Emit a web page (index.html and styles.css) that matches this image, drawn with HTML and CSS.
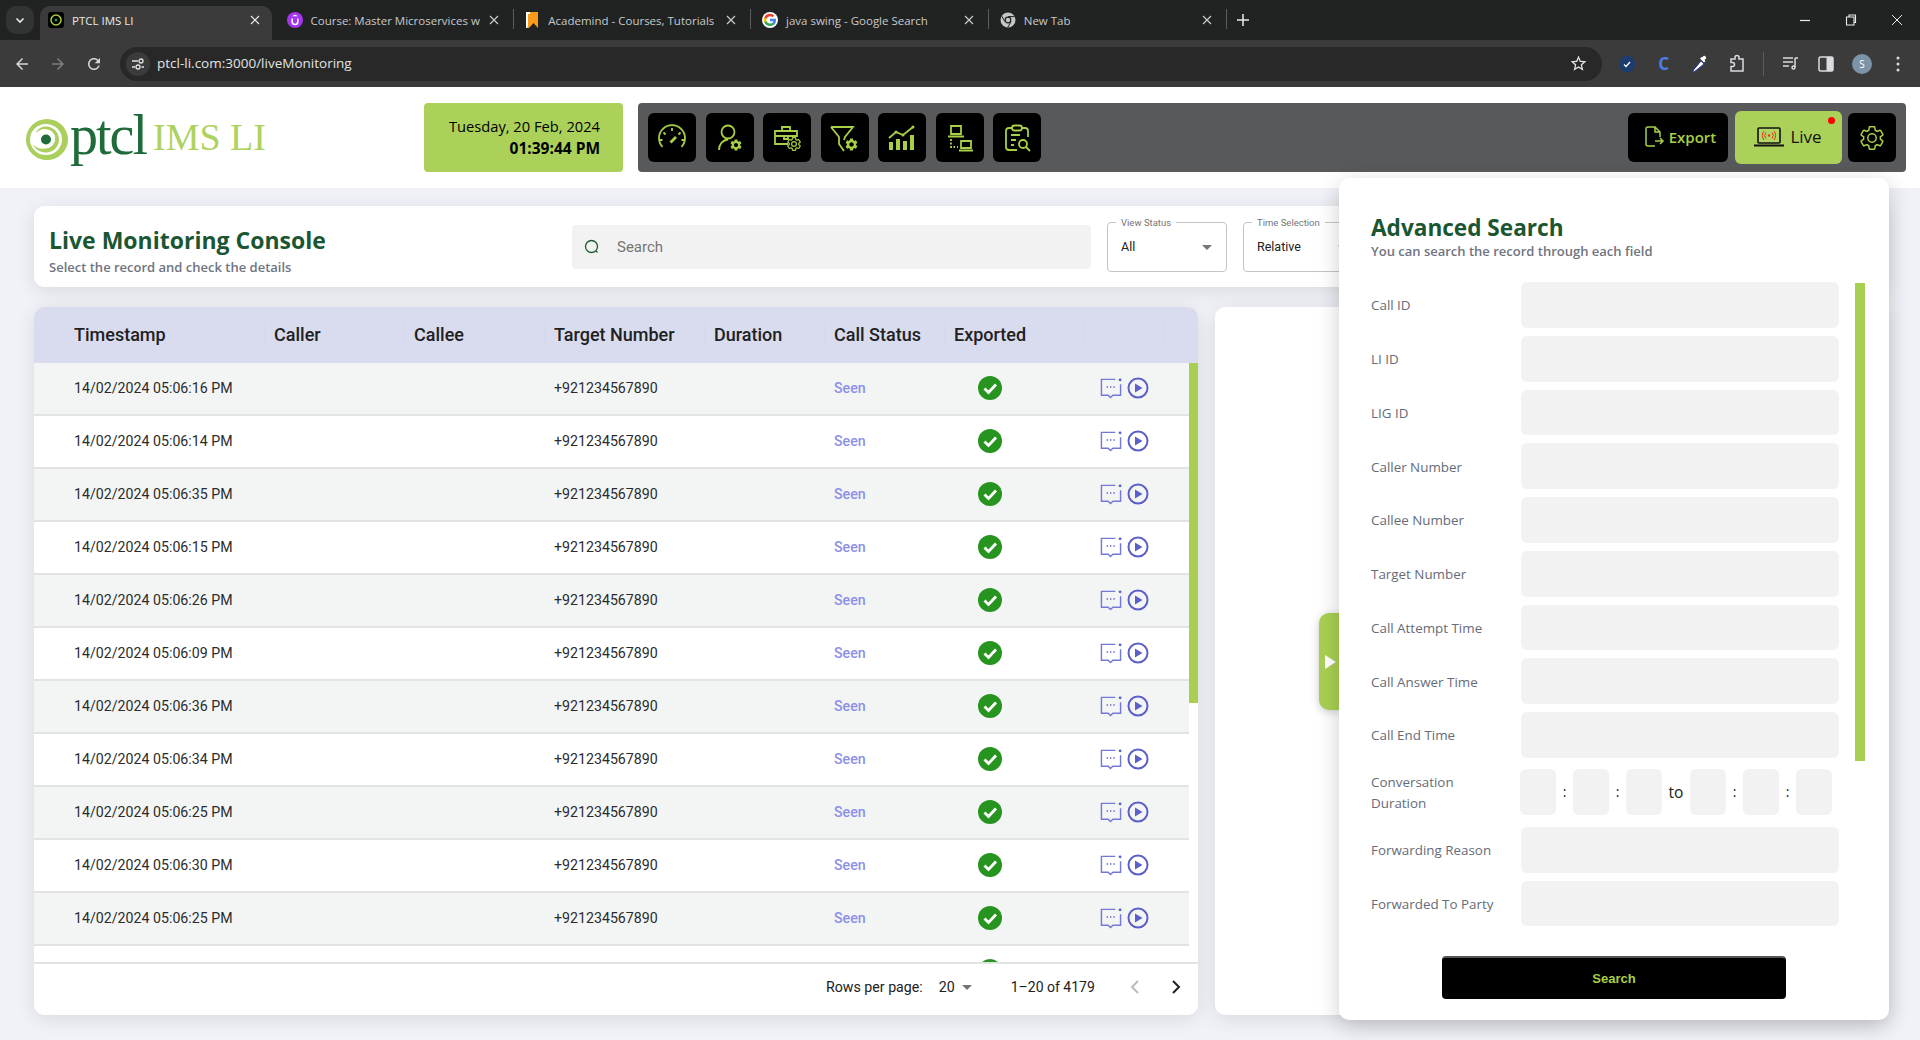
FILE: index.html
```html
<!DOCTYPE html>
<html>
<head>
    <title>PTCL IMS LI</title>
    <link rel="stylesheet" href="styles.css">
</head>
<body>
    <svg class="sprites" width="0" height="0">
        <symbol id="x" viewBox="0 0 12 12"><path d="M2 2l8 8M10 2l-8 8" fill="none" stroke="currentColor" stroke-width="1.2"/></symbol>
        <symbol id="cog" viewBox="0 0 24 24"><path fill-rule="evenodd" d="M19.14 12.94c.04-.3.06-.61.06-.94 0-.32-.02-.64-.07-.94l2.03-1.58c.18-.14.23-.41.12-.61l-1.92-3.32c-.12-.22-.37-.29-.59-.22l-2.39.96c-.5-.38-1.03-.7-1.62-.94l-.36-2.54c-.04-.24-.24-.41-.48-.41h-3.84c-.24 0-.43.17-.47.41l-.36 2.54c-.59.24-1.13.57-1.62.94l-2.39-.96c-.22-.08-.47 0-.59.22L2.74 8.87c-.12.21-.08.47.12.61l2.03 1.58c-.05.3-.09.63-.09.94s.02.64.07.94l-2.03 1.58c-.18.14-.23.41-.12.61l1.92 3.32c.12.22.37.29.59.22l2.39-.96c.5.38 1.03.7 1.62.94l.36 2.54c.05.24.24.41.48.41h3.84c.24 0 .44-.17.47-.41l.36-2.54c.59-.24 1.13-.56 1.62-.94l2.39.96c.22.08.47 0 .59-.22l1.92-3.32c.12-.22.07-.47-.12-.61l-2.01-1.58zM12 15.6c-1.98 0-3.6-1.62-3.6-3.6s1.62-3.6 3.6-3.6 3.6 1.62 3.6 3.6-1.62 3.6-3.6 3.6z"/></symbol>
        <symbol id="check" viewBox="0 0 24 24"><circle cx="12" cy="12" r="12" fill="#289420"/><path d="M6.5 12.5l4 4 7.5-8" fill="none" stroke="#fff" stroke-width="2.8"/></symbol>
        <symbol id="chat" viewBox="0 0 23 24"><path d="M16 3H1.5v16.500h7l2.500 2.500 2.500-2.500h8V8" fill="none" stroke="#7478d8" stroke-width="1.500"/><circle cx="21" cy="3.500" r="1.500" fill="#5b5fc7"/><path d="M7 11h1.400M10.500 11h1.400M14 11h1.400" stroke="#5b5fc7" stroke-width="1.500"/></symbol>
        <symbol id="play" viewBox="0 0 22 22"><circle cx="11" cy="11" r="9.500" fill="none" stroke="#5b5fc7" stroke-width="2"/><path d="M8 6.500l7.500 4.500L8 15.500z" fill="#5b5fc7"/></symbol>
    </svg>

    <div class="tabstrip">
        <button class="tab-menu"><svg width="12" height="12" viewBox="0 0 12 12"><path d="M2.500 4.500L6 8l3.500-3.500" fill="none" stroke="#e8eaed" stroke-width="1.600"/></svg></button>
        <div class="tab active">
            <svg class="tab-icon" viewBox="0 0 16 16"><rect width="16" height="16" rx="3" fill="#000"/><circle cx="8" cy="8" r="5" fill="none" stroke="#a8cf45" stroke-width="1.500"/><circle cx="8" cy="8" r="1.500" fill="#2f8f46"/></svg>
            <span class="tab-title">PTCL IMS LI</span>
            <svg class="tab-close"><use href="#x"/></svg>
        </div>
        <span class="tab-gap"></span>
        <div class="tab">
            <svg class="tab-icon" viewBox="0 0 16 16"><circle cx="8" cy="8" r="8" fill="#a435f0"/><path d="M5.200 6.500v3.200a2.800 2.800 0 0 0 5.600 0V6.500" fill="none" stroke="#fff" stroke-width="1.600"/><path d="M8 2.500l3 1.800H5z" fill="#fff"/></svg>
            <span class="tab-title">Course: Master Microservices w</span>
            <svg class="tab-close"><use href="#x"/></svg>
        </div>
        <span class="tab-sep"></span>
        <div class="tab">
            <svg class="tab-icon" viewBox="0 0 16 16"><path d="M2 0h12v16l-4.500-5L5 16H3z" fill="#f89a1c"/><path d="M2 0h4v2H4v12l-1 2H2z" fill="#fff"/></svg>
            <span class="tab-title">Academind - Courses, Tutorials</span>
            <svg class="tab-close"><use href="#x"/></svg>
        </div>
        <span class="tab-sep"></span>
        <div class="tab">
            <svg class="tab-icon" viewBox="0 0 16 16"><circle cx="8" cy="8" r="8" fill="#fff"/><path d="M14 8.100c0-.5 0-.9-.1-1.300H8v2.500h3.400a3 3 0 0 1-1.300 1.900v1.600h2.100c1.200-1.100 1.800-2.800 1.800-4.700z" fill="#4285f4"/><path d="M8 14c1.700 0 3.100-.6 4.200-1.500l-2.100-1.600c-.6.400-1.300.6-2.100.6a3.700 3.700 0 0 1-3.500-2.500H2.300v1.600A6.300 6.300 0 0 0 8 14z" fill="#34a853"/><path d="M4.500 9a3.700 3.700 0 0 1 0-2.200V5.200H2.300a6.300 6.300 0 0 0 0 5.500z" fill="#fbbc05"/><path d="M8 4.300c.9 0 1.700.3 2.400 1l1.800-1.800A6.100 6.100 0 0 0 2.300 5.200l2.200 1.600A3.700 3.700 0 0 1 8 4.300z" fill="#ea4335"/></svg>
            <span class="tab-title">java swing - Google Search</span>
            <svg class="tab-close"><use href="#x"/></svg>
        </div>
        <span class="tab-sep"></span>
        <div class="tab">
            <svg class="tab-icon" viewBox="0 0 16 16"><circle cx="8" cy="8" r="7.500" fill="#c4c7c5"/><circle cx="8" cy="8" r="3.400" fill="#202124"/><circle cx="8" cy="8" r="2.200" fill="#c4c7c5"/><path d="M8 4.600h6.500M5 9.700L1.800 4.200M11 9.700l-3.200 5.600" stroke="#202124" stroke-width="1"/></svg>
            <span class="tab-title">New Tab</span>
            <svg class="tab-close"><use href="#x"/></svg>
        </div>
        <span class="tab-sep"></span>
        <svg class="new-tab" width="14" height="14" viewBox="0 0 14 14"><path d="M7 1v12M1 7h12" stroke="#e8eaed" stroke-width="1.500"/></svg>
        <div class="window-controls">
            <span class="win-btn"><svg width="12" height="12" viewBox="0 0 12 12"><path d="M1 6.500h10" stroke="#e8eaed" stroke-width="1.200"/></svg></span>
            <span class="win-btn"><svg width="12" height="12" viewBox="0 0 12 12"><path d="M4 2.500V1h6.500v7.500H9M1.500 3h7.500v8H1.500z" fill="none" stroke="#e8eaed" stroke-width="1.100"/></svg></span>
            <span class="win-btn"><svg width="12" height="12" viewBox="0 0 12 12"><path d="M1 1l10 10M11 1L1 11" stroke="#e8eaed" stroke-width="1"/></svg></span>
        </div>
    </div>

    <div class="toolbar">
        <span class="nav-btn"><svg width="18" height="18" viewBox="0 0 24 24" fill="#d5d7da"><path d="M20 11H7.830l5.590-5.590L12 4l-8 8 8 8 1.410-1.410L7.830 13H20v-2z"/></svg></span>
        <span class="nav-btn"><svg width="18" height="18" viewBox="0 0 24 24" fill="#7c7e80"><path d="M4 11h12.170l-5.590-5.590L12 4l8 8-8 8-1.410-1.410L16.170 13H4v-2z"/></svg></span>
        <span class="nav-btn"><svg width="18" height="18" viewBox="0 0 24 24" fill="#d5d7da"><path d="M17.650 6.350C16.200 4.900 14.210 4 12 4c-4.420 0-7.990 3.580-7.990 8s3.570 8 7.990 8c3.730 0 6.840-2.550 7.730-6h-2.080c-.82 2.330-3.040 4-5.650 4-3.310 0-6-2.690-6-6s2.690-6 6-6c1.660 0 3.140.69 4.220 1.780L13 11h7V4l-2.350 2.350z"/></svg></span>
        <div class="omnibox">
            <span class="site-btn"><svg width="14" height="14" viewBox="0 0 14 14" fill="none" stroke="#e3e3e3" stroke-width="1.300"><path d="M1 4h6M1 10h3M10.500 10H13"/><circle cx="10" cy="4" r="2"/><circle cx="7" cy="10" r="2"/></svg></span>
            <span class="url">ptcl-li.com:3000/liveMonitoring</span>
            <svg class="star" width="19" height="19" viewBox="0 0 24 24" fill="#e3e3e3"><path d="M22 9.240l-7.190-.62L12 2 9.190 8.630 2 9.240l5.460 4.730L5.820 21 12 17.270 18.180 21l-1.630-7.030L22 9.240zM12 15.400l-3.760 2.270 1-4.280-3.320-2.880 4.380-.38L12 6.100l1.710 4.040 4.380.38-3.320 2.880 1 4.280L12 15.400z"/></svg>
        </div>
        <div class="extensions">
            <span class="ext-btn"><svg width="16" height="18" viewBox="0 0 16 18"><ellipse cx="8" cy="9" rx="8" ry="8.500" fill="#1d3c6e"/><path d="M5 9.500l2 2 4-4.500" fill="none" stroke="#fff" stroke-width="1.300"/></svg></span>
            <span class="ext-btn ext-c">C</span>
            <span class="ext-btn"><svg width="18" height="20" viewBox="0 0 18 20"><path d="M3 18l-1 1 .5-3L10 7l3 3z" fill="#fff" stroke="#2a3fb8" stroke-width="1"/><path d="M11 3.500l1.500-1.500c1-1 3.500 1.500 2.500 2.500L13.500 6l1 1-1.500 1.500-4-4L10.500 3z" fill="#fff"/></svg></span>
            <span class="ext-btn"><svg width="18" height="20" viewBox="0 0 18 20" fill="none" stroke="#dadce0" stroke-width="1.500"><path d="M3 5h4V3.500a2 2 0 0 1 4 0V5h4v12H3v-4.500h1.500a2 2 0 0 0 0-4H3z"/></svg></span>
            <span class="ext-sep"></span>
            <span class="ext-btn"><svg width="18" height="18" viewBox="0 0 18 18" fill="none" stroke="#dadce0" stroke-width="1.500"><path d="M2 3h10M2 7h10M2 11h6M14 3v9"/><path d="M14 3h3"/><circle cx="12.500" cy="12.500" r="1.500"/></svg></span>
            <span class="ext-btn"><svg width="18" height="18" viewBox="0 0 18 18"><rect x="2" y="2" width="14" height="14" rx="1.500" fill="none" stroke="#dadce0" stroke-width="1.500"/><rect x="9.500" y="2" width="6.500" height="14" fill="#dadce0"/></svg></span>
            <span class="ext-btn"><span class="avatar">S</span></span>
            <span class="ext-btn"><svg width="4" height="16" viewBox="0 0 4 16" fill="#dadce0"><circle cx="2" cy="2" r="1.500"/><circle cx="2" cy="8" r="1.500"/><circle cx="2" cy="14" r="1.500"/></svg></span>
        </div>
    </div>

    <header class="app-header">
        <div class="logo">
            <svg class="logo-swirl" width="43" height="42" viewBox="0 0 43 42">
                <path fill-rule="evenodd" d="M21 0a21 20.500 0 1 1 0 41 21 20.500 0 1 1 0-41zM20 5a16 15.500 0 1 0 0 31 16 15.500 0 1 0 0-31z" fill="#aacf5c"/>
                <path fill-rule="evenodd" d="M20 7.500a13 13 0 1 1 0 26c-7 0-11-4-13-8 3 3 7 5 12 4a10 9.500 0 0 0 0-19.500c-4 0-7 2-9 4 1.500-4 5-6.500 10-6.500z" fill="#aacf5c"/>
                <circle cx="20" cy="20.500" r="5" fill="#1f6b3a"/>
            </svg>
            <span class="logo-ptcl">ptcl</span>
            <span class="logo-ims">IMS LI</span>
        </div>
        <div class="date-box">
            <div>Tuesday, 20 Feb, 2024</div>
            <div class="time">01:39:44 PM</div>
        </div>
        <nav class="main-nav">
            <button class="nav-icon"><svg viewBox="0 0 32 32"><path d="M6.500 25A13 13 0 1 1 25.500 25"/><path d="M16 6v3M7.500 10.500l2 2M24.500 10.500l-2 2M3.500 18h3M25.500 18h3"/><path d="M14.500 20.500L20 15" stroke-width="2.800"/></svg></button>
            <button class="nav-icon"><svg viewBox="0 0 32 32"><circle cx="14" cy="10" r="6.500"/><path d="M5 28c0-6 4-10 9-10.500"/><use href="#cog" x="15" y="16" width="14" height="14" class="cog-fill"/></svg></button>
            <button class="nav-icon"><svg viewBox="0 0 32 32"><path d="M17 22H4V9h22v6M4 9v5h22V9M11 9V5h8v4M13 14v3h4v-3"/><use href="#cog" x="15" y="14" width="16" height="16" class="cog-line"/></svg></button>
            <button class="nav-icon"><svg viewBox="0 0 32 32"><path d="M2 5h22l-8 10-1 3M2 5l8 10v7l5 7"/><use href="#cog" x="15" y="15" width="15" height="15" class="cog-fill"/></svg></button>
            <button class="nav-icon"><svg viewBox="0 0 32 32"><path class="solid" d="M3 20h4v8H3zM10 17h4v11h-4zM17 19h4v9h-4zM24 13h4v15h-4z"/><path d="M3 16l7-6 7 3 10-8"/><circle class="solid" cx="10" cy="10" r="1.500"/><circle class="solid" cx="17" cy="13" r="1.500"/><circle class="solid" cx="27" cy="5" r="1.500"/></svg></button>
            <button class="nav-icon"><svg viewBox="0 0 32 32"><path d="M7 4h10v8H7zM4 14.500h16"/><path d="M7 17v8h4M13 25h1" stroke-dasharray="2 1.500"/><path d="M17 19h10v7H17zM15 28.500h14"/></svg></button>
            <button class="nav-icon"><svg viewBox="0 0 32 32"><path d="M11 6H8a3 3 0 0 0-3 3v16a3 3 0 0 0 3 3h8M21 6h3a3 3 0 0 1 3 3v6"/><rect x="11" y="3.500" width="10" height="5" rx="2.500"/><path d="M10 13h9M10 18h5M10 23h3"/><circle cx="22" cy="22" r="4"/><path d="M25 25l4 4"/></svg></button>
            <div class="nav-right">
                <button class="export-btn">
                    <svg width="20" height="22" viewBox="0 0 20 22" fill="none" stroke="#a8cf45" stroke-width="1.500"><path d="M10 20H3a2 2 0 0 1-2-2V3a2 2 0 0 1 2-2h7l5 5v5M10 1v5h5M10 15h8M15 12l3 3-3 3"/></svg>
                    Export
                </button>
                <button class="live-btn">
                    <svg width="30" height="20" viewBox="0 0 30 20" fill="none"><rect x="4" y="1" width="22" height="15" rx="1" fill="#b3d764" stroke="#111" stroke-width="1.600"/><path d="M0 18.500h30" stroke="#111" stroke-width="2"/><circle cx="15" cy="8.500" r="1.200" fill="#e5331e"/><path d="M12 5.500a4.500 4.500 0 0 0 0 6M18 5.500a4.500 4.500 0 0 1 0 6M10 4a7 7 0 0 0 0 9M20 4a7 7 0 0 1 0 9" stroke="#e5331e" stroke-width="1"/></svg>
                    Live
                    <span class="live-dot"></span>
                </button>
                <button class="nav-icon"><svg class="settings" viewBox="0 0 24 24"><use href="#cog"/></svg></button>
            </div>
        </nav>
    </header>

    <main class="content">
        <section class="console-card">
            <div class="console-title">
                <h1>Live Monitoring Console</h1>
                <p>Select the record and check the details</p>
            </div>
            <div class="search-box">
                <svg width="18" height="18" viewBox="0 0 18 18" fill="none" stroke="#1f5a33" stroke-width="1.300"><circle cx="8.500" cy="8.500" r="6"/><path d="M13 13l1.500 1.500"/></svg>
                <span>Search</span>
            </div>
            <div class="select-box">
                <span class="select-label">View Status</span>
                <span>All</span>
                <span class="caret"></span>
            </div>
            <div class="select-box">
                <span class="select-label">Time Selection</span>
                <span>Relative</span>
                <span class="caret"></span>
            </div>
        </section>

        <section class="lower">
            <div class="table-card">
                <div class="grid-row grid-head">
                    <div class="cell">Timestamp</div>
                    <div class="cell">Caller</div>
                    <div class="cell">Callee</div>
                    <div class="cell">Target Number</div>
                    <div class="cell">Duration</div>
                    <div class="cell">Call Status</div>
                    <div class="cell">Exported</div>
                    <div class="cell"></div>
                </div>
                <div class="grid-body">
                    <div class="scroll-thumb"></div>
                    <div class="grid-row"><div class="cell">14/02/2024 05:06:16 PM</div><div class="cell"></div><div class="cell"></div><div class="cell">+921234567890</div><div class="cell"></div><div class="cell seen">Seen</div><div class="cell"><svg class="check"><use href="#check"/></svg></div><div class="cell actions"><svg class="chat"><use href="#chat"/></svg><svg class="play"><use href="#play"/></svg></div></div>
                    <div class="grid-row"><div class="cell">14/02/2024 05:06:14 PM</div><div class="cell"></div><div class="cell"></div><div class="cell">+921234567890</div><div class="cell"></div><div class="cell seen">Seen</div><div class="cell"><svg class="check"><use href="#check"/></svg></div><div class="cell actions"><svg class="chat"><use href="#chat"/></svg><svg class="play"><use href="#play"/></svg></div></div>
                    <div class="grid-row"><div class="cell">14/02/2024 05:06:35 PM</div><div class="cell"></div><div class="cell"></div><div class="cell">+921234567890</div><div class="cell"></div><div class="cell seen">Seen</div><div class="cell"><svg class="check"><use href="#check"/></svg></div><div class="cell actions"><svg class="chat"><use href="#chat"/></svg><svg class="play"><use href="#play"/></svg></div></div>
                    <div class="grid-row"><div class="cell">14/02/2024 05:06:15 PM</div><div class="cell"></div><div class="cell"></div><div class="cell">+921234567890</div><div class="cell"></div><div class="cell seen">Seen</div><div class="cell"><svg class="check"><use href="#check"/></svg></div><div class="cell actions"><svg class="chat"><use href="#chat"/></svg><svg class="play"><use href="#play"/></svg></div></div>
                    <div class="grid-row"><div class="cell">14/02/2024 05:06:26 PM</div><div class="cell"></div><div class="cell"></div><div class="cell">+921234567890</div><div class="cell"></div><div class="cell seen">Seen</div><div class="cell"><svg class="check"><use href="#check"/></svg></div><div class="cell actions"><svg class="chat"><use href="#chat"/></svg><svg class="play"><use href="#play"/></svg></div></div>
                    <div class="grid-row"><div class="cell">14/02/2024 05:06:09 PM</div><div class="cell"></div><div class="cell"></div><div class="cell">+921234567890</div><div class="cell"></div><div class="cell seen">Seen</div><div class="cell"><svg class="check"><use href="#check"/></svg></div><div class="cell actions"><svg class="chat"><use href="#chat"/></svg><svg class="play"><use href="#play"/></svg></div></div>
                    <div class="grid-row"><div class="cell">14/02/2024 05:06:36 PM</div><div class="cell"></div><div class="cell"></div><div class="cell">+921234567890</div><div class="cell"></div><div class="cell seen">Seen</div><div class="cell"><svg class="check"><use href="#check"/></svg></div><div class="cell actions"><svg class="chat"><use href="#chat"/></svg><svg class="play"><use href="#play"/></svg></div></div>
                    <div class="grid-row"><div class="cell">14/02/2024 05:06:34 PM</div><div class="cell"></div><div class="cell"></div><div class="cell">+921234567890</div><div class="cell"></div><div class="cell seen">Seen</div><div class="cell"><svg class="check"><use href="#check"/></svg></div><div class="cell actions"><svg class="chat"><use href="#chat"/></svg><svg class="play"><use href="#play"/></svg></div></div>
                    <div class="grid-row"><div class="cell">14/02/2024 05:06:25 PM</div><div class="cell"></div><div class="cell"></div><div class="cell">+921234567890</div><div class="cell"></div><div class="cell seen">Seen</div><div class="cell"><svg class="check"><use href="#check"/></svg></div><div class="cell actions"><svg class="chat"><use href="#chat"/></svg><svg class="play"><use href="#play"/></svg></div></div>
                    <div class="grid-row"><div class="cell">14/02/2024 05:06:30 PM</div><div class="cell"></div><div class="cell"></div><div class="cell">+921234567890</div><div class="cell"></div><div class="cell seen">Seen</div><div class="cell"><svg class="check"><use href="#check"/></svg></div><div class="cell actions"><svg class="chat"><use href="#chat"/></svg><svg class="play"><use href="#play"/></svg></div></div>
                    <div class="grid-row"><div class="cell">14/02/2024 05:06:25 PM</div><div class="cell"></div><div class="cell"></div><div class="cell">+921234567890</div><div class="cell"></div><div class="cell seen">Seen</div><div class="cell"><svg class="check"><use href="#check"/></svg></div><div class="cell actions"><svg class="chat"><use href="#chat"/></svg><svg class="play"><use href="#play"/></svg></div></div>
                    <div class="grid-row"><div class="cell"></div><div class="cell"></div><div class="cell"></div><div class="cell"></div><div class="cell"></div><div class="cell"></div><div class="cell"><svg class="check"><use href="#check"/></svg></div><div class="cell"></div></div>
                </div>
                <div class="pagination">
                    <span>Rows per page:</span>
                    <span class="page-size">20<span class="caret"></span></span>
                    <span class="page-range">1–20 of 4179</span>
                    <svg class="page-prev" width="12" height="16" viewBox="0 0 12 16"><path d="M9 2L3 8l6 6" fill="none" stroke="#bdbdbd" stroke-width="2"/></svg>
                    <svg class="page-next" width="12" height="16" viewBox="0 0 12 16"><path d="M3 2l6 6-6 6" fill="none" stroke="#212121" stroke-width="2"/></svg>
                </div>
            </div>
            <div class="detail-card"></div>
        </section>
    </main>

    <div class="panel-handle"><span class="handle-arrow"></span></div>

    <aside class="search-panel">
        <h2>Advanced Search</h2>
        <p>You can search the record through each field</p>
        <div class="panel-scroll"></div>
        <form class="search-form">
            <div class="form-row"><label>Call ID</label><div class="input"></div></div>
            <div class="form-row"><label>LI ID</label><div class="input"></div></div>
            <div class="form-row"><label>LIG ID</label><div class="input"></div></div>
            <div class="form-row"><label>Caller Number</label><div class="input"></div></div>
            <div class="form-row"><label>Callee Number</label><div class="input"></div></div>
            <div class="form-row"><label>Target Number</label><div class="input"></div></div>
            <div class="form-row"><label>Call Attempt Time</label><div class="input"></div></div>
            <div class="form-row"><label>Call Answer Time</label><div class="input"></div></div>
            <div class="form-row"><label>Call End Time</label><div class="input"></div></div>
            <div class="form-row duration-row">
                <label>Conversation Duration</label>
                <div class="duration">
                    <div class="input"></div><span class="colon">:</span><div class="input"></div><span class="colon">:</span><div class="input"></div>
                    <span class="to">to</span>
                    <div class="input"></div><span class="colon">:</span><div class="input"></div><span class="colon">:</span><div class="input"></div>
                </div>
            </div>
            <div class="form-row"><label>Forwarding Reason</label><div class="input"></div></div>
            <div class="form-row"><label>Forwarded To Party</label><div class="input"></div></div>
        </form>
        <button class="search-btn">Search</button>
    </aside>
</body>
</html>
```

FILE: styles.css
```css
* {
    box-sizing: border-box;
}
html, body {
    margin: 0;
    height: 100%;
}
body {
    display: flex;
    flex-direction: column;
    overflow: hidden;
    background: #f0f2f7;
    font-family: "Open Sans", sans-serif;
    color: #212121;
}
button {
    font-family: inherit;
    border: none;
    padding: 0;
}
.sprites {
    display: block;
    height: 0;
}

/* browser chrome */
.tabstrip {
    display: flex;
    align-items: flex-end;
    height: 40px;
    padding-left: 6px;
    background: #212323;
    flex-shrink: 0;
}
.tab-menu {
    display: flex;
    align-items: center;
    justify-content: center;
    width: 28px;
    height: 28px;
    margin: 0 6px 6px 0;
    border-radius: 10px;
    background: #323434;
}
.tab {
    display: flex;
    align-items: center;
    width: 232px;
    height: 34px;
    padding: 0 11px 6px 8px;
    border-radius: 10px 10px 0 0;
    color: #c7c9cb;
}
.tab.active {
    background: #3b3b3b;
    color: #e8eaed;
}
.tab-icon {
    width: 16px;
    height: 16px;
    margin-right: 8px;
    flex-shrink: 0;
}
.tab-title {
    width: 167px;
    font-size: 11.500px;
    white-space: nowrap;
}
.tab-close {
    width: 12px;
    height: 12px;
    margin-left: 10px;
    flex-shrink: 0;
}
.tab-gap {
    width: 6.500px;
}
.tab-sep {
    width: 1px;
    height: 20px;
    margin: 0 2.750px 11px 2px;
    background: #5a5c5e;
}
.new-tab {
    margin: 0 0 13px 6px;
}
.window-controls {
    display: flex;
    margin-left: auto;
    align-self: stretch;
}
.win-btn {
    display: flex;
    align-items: center;
    justify-content: center;
    width: 46px;
}
.toolbar {
    display: flex;
    align-items: center;
    height: 47px;
    padding-left: 4px;
    background: #3b3b3b;
    flex-shrink: 0;
}
.nav-btn {
    display: flex;
    align-items: center;
    justify-content: center;
    width: 36px;
}
.omnibox {
    display: flex;
    align-items: center;
    width: 1482px;
    height: 34px;
    margin-left: 8px;
    padding: 0 14px 0 6px;
    border-radius: 17px;
    background: #282828;
}
.site-btn {
    display: flex;
    align-items: center;
    justify-content: center;
    width: 24px;
    height: 24px;
    border-radius: 50%;
    background: #3b3b3b;
}
.url {
    margin: 0 0 2px 7px;
    font-size: 13.500px;
    color: #e3e3e3;
}
.star {
    margin-left: auto;
}
.extensions {
    display: flex;
    align-items: center;
    margin-left: 7px;
}
.ext-btn {
    display: flex;
    align-items: center;
    justify-content: center;
    width: 36.500px;
}
.ext-sep ~ .ext-btn {
    width: 36px;
}
.ext-c {
    font-size: 17px;
    font-weight: 700;
    color: #4a7de8;
}
.ext-sep {
    width: 1px;
    height: 24px;
    margin: 0 8px;
    background: #5a5c5e;
}
.avatar {
    display: flex;
    align-items: center;
    justify-content: center;
    width: 20px;
    height: 20px;
    border-radius: 50%;
    background: #7d93a8;
    font-size: 10px;
    color: #fff;
}

/* app header */
.app-header {
    display: flex;
    height: 101px;
    padding: 16px 14px 0 26px;
    background: #fff;
    flex-shrink: 0;
}
.logo {
    display: flex;
    align-items: flex-start;
    width: 398px;
    height: 69px;
}
.logo-swirl {
    margin: 16px 1px 0 0;
}
.logo-ptcl {
    font-family: "Liberation Serif", serif;
    font-size: 56px;
    line-height: 64px;
    letter-spacing: -2px;
    color: #1f6b3a;
}
.logo-ims {
    font-family: "Liberation Serif", serif;
    font-size: 38px;
    line-height: 44px;
    margin: 12px 0 0 7px;
    color: #aed25f;
}
.date-box {
    display: flex;
    flex-direction: column;
    justify-content: center;
    gap: 1px;
    width: 199px;
    height: 69px;
    padding-right: 23px;
    border-radius: 4px;
    background: #abd15a;
    text-align: right;
    font-size: 14.700px;
    color: #000;
}
.date-box .time {
    font-size: 15.500px;
    font-weight: 700;
}
.main-nav {
    display: flex;
    align-items: center;
    gap: 9.500px;
    flex: 1;
    height: 69px;
    margin-left: 15px;
    padding: 0 10px;
    border-radius: 4px;
    background: #58595b;
}
.nav-icon {
    display: flex;
    align-items: center;
    justify-content: center;
    width: 48px;
    height: 49px;
    border-radius: 6px;
    background: #000;
}
.nav-icon svg {
    width: 32px;
    height: 32px;
    fill: none;
    stroke: #a8cf45;
    stroke-width: 1.800;
}
.nav-icon .solid {
    fill: #a8cf45;
    stroke: none;
}
.nav-icon .cog-fill {
    fill: #a8cf45;
    stroke: none;
}
.nav-icon .cog-line {
    fill: #000;
    stroke-width: 1.800;
}
.nav-icon svg.settings {
    width: 28px;
    height: 28px;
    stroke-width: 1.300;
}
.nav-right {
    display: flex;
    align-items: center;
    gap: 6.500px;
    margin-left: auto;
}
.export-btn {
    display: flex;
    align-items: center;
    justify-content: center;
    gap: 4px;
    width: 100px;
    height: 49px;
    padding: 0 0 2px 5px;
    border-radius: 6px;
    background: #000;
    font-size: 15px;
    font-weight: 600;
    color: #a8cf45;
}
.live-btn {
    position: relative;
    display: flex;
    align-items: center;
    justify-content: center;
    gap: 6px;
    width: 107px;
    height: 53px;
    padding-bottom: 2px;
    border-radius: 6px;
    background: #abd15a;
    font-size: 17px;
    color: #111;
}
.live-dot {
    position: absolute;
    top: 6px;
    right: 7px;
    width: 7px;
    height: 7px;
    border-radius: 50%;
    background: #f00;
}

/* main content */
.content {
    flex: 1;
    padding: 18px 34px 0;
    min-height: 0;
}
.console-card {
    display: flex;
    align-items: center;
    height: 81px;
    padding-left: 15px;
    border-radius: 10px;
    background: #fff;
    box-shadow: 0 4px 20px rgba(0,0,0,0.1);
}
.console-title {
    align-self: flex-start;
    width: 523px;
    padding-top: 19px;
}
.console-title h1 {
    margin: 0;
    font-size: 23px;
    line-height: 30px;
    font-weight: 700;
    color: #1a5632;
}
.console-title p {
    margin: 3px 0 0;
    font-size: 13px;
    font-weight: 600;
    line-height: 18px;
    color: #6f7480;
}
.search-box {
    display: flex;
    align-items: center;
    gap: 16px;
    width: 519px;
    height: 44px;
    padding-left: 11px;
    border-radius: 4px;
    background: #f2f2f2;
    font-family: Roboto, sans-serif;
    font-size: 15px;
    color: #757575;
}
.select-box {
    position: relative;
    display: flex;
    align-items: center;
    width: 120px;
    height: 50px;
    margin-left: 16px;
    padding: 0 14px 0 13px;
    border: 1px solid #c4c4c4;
    border-radius: 4px;
    font-family: Roboto, sans-serif;
    font-size: 12.500px;
}
.select-label {
    position: absolute;
    top: -6px;
    left: 8px;
    padding: 0 5px;
    background: #fff;
    font-size: 9.500px;
    line-height: 12px;
    color: #757575;
}
.caret {
    display: inline-block;
    width: 0;
    height: 0;
    border-left: 5px solid transparent;
    border-right: 5px solid transparent;
    border-top: 5px solid #757575;
}
.select-box .caret {
    margin-left: auto;
    margin-top: 2px;
}
.lower {
    display: flex;
    gap: 17px;
    height: 708px;
    margin-top: 20px;
}
.table-card {
    position: relative;
    display: flex;
    flex-direction: column;
    width: 1164px;
    border-radius: 10px;
    background: #fff;
    box-shadow: 0 4px 20px rgba(0,0,0,0.1);
    overflow: hidden;
    font-family: Roboto, sans-serif;
}
.detail-card {
    flex: 1;
    border-radius: 10px;
    background: #fff;
    box-shadow: 0 4px 20px rgba(0,0,0,0.1);
}
.grid-row {
    display: grid;
    grid-template-columns: 230px 140px 140px 160px 120px 120px 140px 80px;
    align-items: center;
    width: 1155px;
    height: 53px;
    padding-bottom: 1px;
    border-bottom: 2px solid #e2e3e3;
    font-size: 14.200px;
    color: #2b2b2b;
    background: #fff;
}
.grid-row:nth-child(even) {
    background: #f3f5f5;
}
.grid-row .cell {
    padding-left: 10px;
}
.grid-row .cell:first-child {
    padding-left: 40px;
}
.grid-head {
    width: 100%;
    height: 56px;
    padding-bottom: 0;
    border-bottom: none;
    background: #d9dcef;
    font-size: 18px;
    font-weight: 500;
    color: #212121;
    flex-shrink: 0;
}
.grid-head .cell {
    height: 24px;
    line-height: 24px;
    white-space: nowrap;
}
.grid-row.grid-head .cell + .cell {
    padding-left: 9px;
    border-left: 1px solid #d5d8ec;
}
.grid-head .cell:last-child {
    border-right: 1px solid #d5d8ec;
}
.grid-body {
    position: relative;
    height: 599px;
    overflow: hidden;
}
.scroll-thumb {
    position: absolute;
    top: 0;
    right: 0;
    width: 9px;
    height: 340px;
    background: #a8cf52;
}
.seen {
    font-weight: 500;
    color: #8c90e8;
}
.check {
    display: block;
    width: 24px;
    height: 24px;
    margin-left: 24px;
}
.actions {
    display: flex;
    align-items: center;
    gap: 5px;
    padding-left: 16px !important;
}
.chat {
    width: 22px;
    height: 24px;
}
.play {
    width: 22px;
    height: 22px;
}
.pagination {
    display: flex;
    align-items: center;
    height: 53px;
    padding: 0 0 5px 792px;
    border-top: 2px solid #e2e3e3;
    font-size: 14.200px;
}
.page-size {
    display: flex;
    align-items: center;
    gap: 7px;
    margin-left: 16px;
}
.page-range {
    margin-left: 39px;
    font-size: 14px;
}
.page-prev {
    margin-left: 34px;
}
.page-next {
    margin-left: 29px;
}

/* advanced search drawer */
.panel-handle {
    position: absolute;
    top: 613px;
    left: 1319px;
    display: flex;
    align-items: center;
    width: 22px;
    height: 97px;
    padding-left: 6px;
    border-radius: 10px 0 0 10px;
    background: #a8cf52;
    box-shadow: 0 2px 10px rgba(0,0,0,0.2);
}
.handle-arrow {
    width: 0;
    height: 0;
    border-top: 7.500px solid transparent;
    border-bottom: 7.500px solid transparent;
    border-left: 11px solid #fff;
}
.search-panel {
    position: absolute;
    top: 178px;
    left: 1339px;
    width: 550px;
    height: 842px;
    padding: 36px 32px 0;
    border-radius: 10px;
    background: #fff;
    box-shadow: 0 6px 22px rgba(0,0,0,0.2);
}
.search-panel h2 {
    margin: 0;
    font-size: 22.600px;
    line-height: 28px;
    font-weight: 700;
    color: #1a5632;
}
.search-panel > p {
    margin: -1px 0 0;
    font-size: 13px;
    font-weight: 600;
    line-height: 20px;
    color: #6f7480;
}
.panel-scroll {
    position: absolute;
    top: 105px;
    left: 516px;
    width: 10px;
    height: 478px;
    background: #a8cf52;
}
.search-form {
    display: flex;
    flex-direction: column;
    gap: 8px;
    margin-top: 21px;
}
.form-row {
    display: grid;
    grid-template-columns: 150px 318px;
    align-items: center;
    height: 45.750px;
}
.form-row label {
    padding-top: 2px;
    font-size: 13.400px;
    font-weight: 500;
    line-height: 21px;
    color: #666b78;
}
.duration-row label {
    padding-right: 30px;
}
.input {
    height: 100%;
    border-radius: 6px;
    background: #f2f2f2;
}
.duration-row {
    height: 46px;
    margin: 3px 0 4px;
}
.duration {
    display: flex;
    align-items: center;
    height: 100%;
    margin-left: -1px;
}
.duration .input {
    width: 36px;
}
.duration .colon {
    width: 17px;
    text-align: center;
    font-size: 14px;
}
.duration .to {
    width: 28px;
    text-align: center;
    font-size: 15.500px;
}
.search-btn {
    display: block;
    width: 344px;
    height: 43px;
    margin: 30px auto 0;
    border-top: 2px solid #555;
    border-radius: 4px;
    background: #000;
    font-family: "Liberation Sans", sans-serif;
    font-size: 13px;
    font-weight: 700;
    color: #a8cf45;
}
```
